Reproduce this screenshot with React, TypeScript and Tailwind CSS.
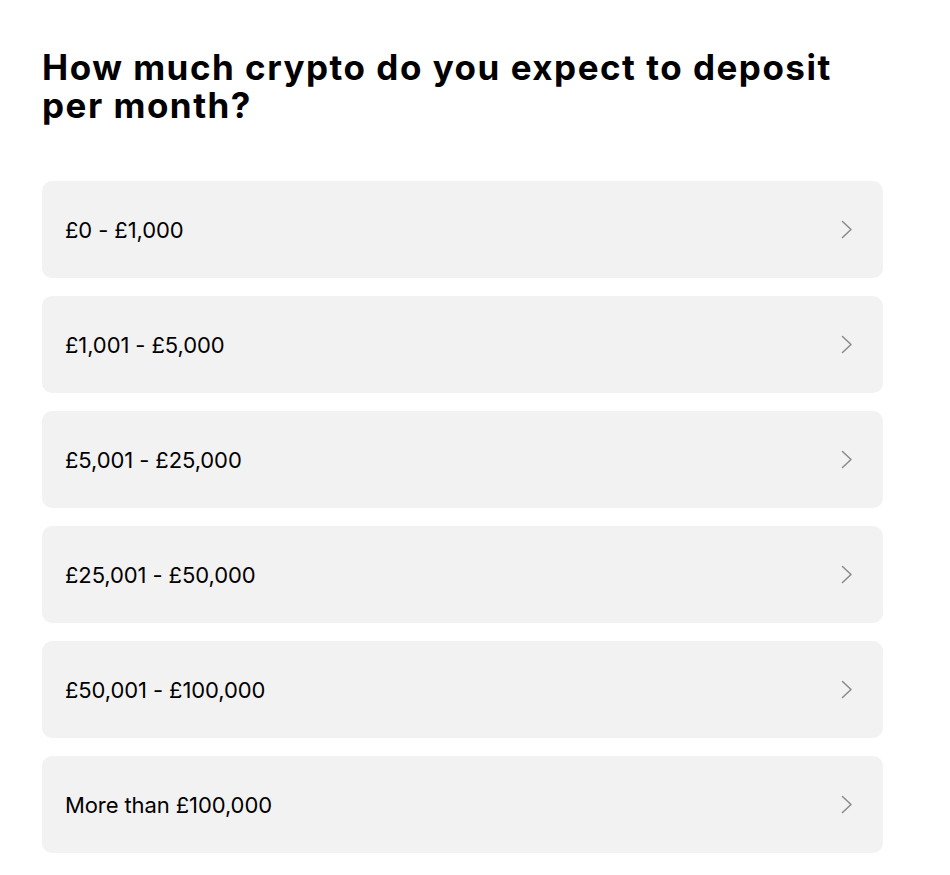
const options = [
  "£0 - £1,000",
  "£1,001 - £5,000",
  "£5,001 - £25,000",
  "£25,001 - £50,000",
  "£50,001 - £100,000",
  "More than £100,000",
];

function Chevron() {
  return (
    <svg width="12" height="19" viewBox="0 0 12 19" fill="none" className="shrink-0">
      <path d="M1.5 1.5L10 9.5L1.5 17.5" stroke="#8a8a8a" strokeWidth="1.5" strokeLinecap="round" strokeLinejoin="round" />
    </svg>
  );
}

export default function App() {
  return (
    <div className="min-h-screen bg-white px-[42px] pt-[48px] text-black [font-family:Inter,'Liberation_Sans',sans-serif]">
      <h1 className="w-[830px] text-[35px] font-bold leading-[38px] tracking-[1.5px]">
        How much crypto do you expect to deposit per month?
      </h1>
      <div className="mt-[57px] flex w-[841px] flex-col gap-[18px]">
        {options.map((label) => (
          <button
            key={label}
            type="button"
            className="flex h-[97px] items-center justify-between rounded-[10px] bg-[#f2f2f2] pl-[23px] pr-[30px] text-left"
          >
            <span className="text-[22px] leading-none tracking-[-0.1px]">{label}</span>
            <Chevron />
          </button>
        ))}
      </div>
    </div>
  );
}
